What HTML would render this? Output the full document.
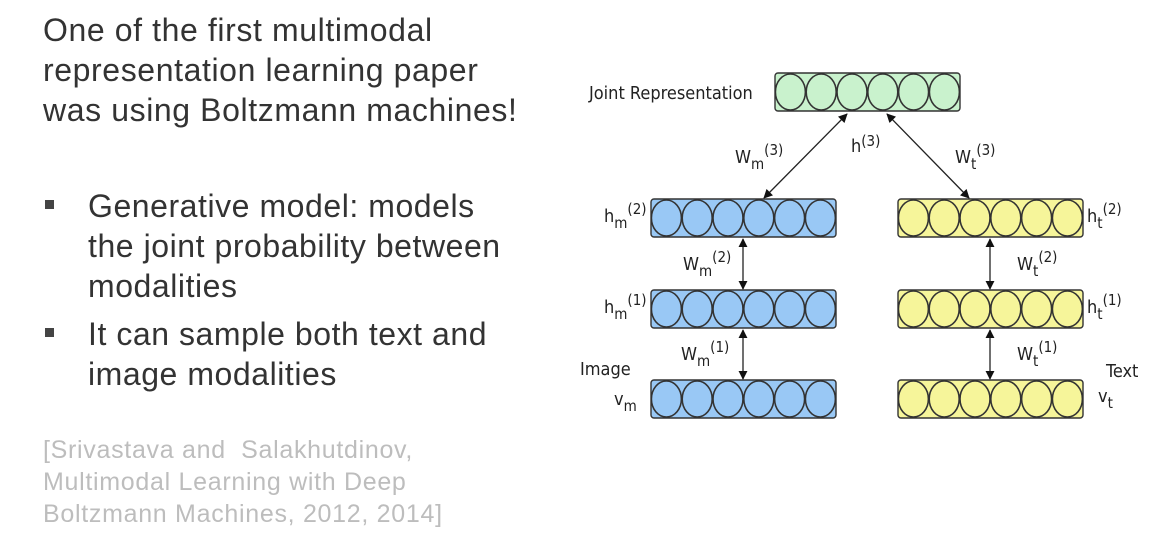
<!DOCTYPE html>
<html><head><style>
body{margin:0;width:1151px;height:538px;background:#fff;overflow:hidden;position:relative;font-family:"Liberation Sans",Arial,sans-serif;}
.t{position:absolute;left:43px;top:10px;font-size:32px;letter-spacing:0.6px;line-height:40px;color:#333;white-space:nowrap;}
.b{position:absolute;left:88px;font-size:32px;letter-spacing:0.55px;line-height:40px;color:#333;white-space:nowrap;}
.sq{position:absolute;left:45px;width:9px;height:9px;background:#444;}
.c{position:absolute;left:43px;top:434px;font-size:25px;letter-spacing:0.7px;line-height:32px;color:#bdbdbd;white-space:nowrap;}
svg{position:absolute;left:0;top:0}
</style></head><body>
<div class="t">One of the first multimodal<br>representation learning paper<br>was using Boltzmann machines!</div>
<div class="sq" style="top:200px"></div>
<div class="b" style="top:186px">Generative model: models<br>the joint probability between<br>modalities</div>
<div class="sq" style="top:328px"></div>
<div class="b" style="top:314px">It can sample both text and<br>image modalities</div>
<div class="c">[Srivastava and&nbsp; Salakhutdinov,<br>Multimodal Learning with Deep<br>Boltzmann Machines, 2012, 2014]</div>
<svg width="1151" height="538" font-family="'DejaVu Sans Condensed','Liberation Sans Narrow',sans-serif" fill="#222">
<defs>
<marker id="a" viewBox="0 0 10 10" refX="9" refY="5" markerWidth="7" markerHeight="7" orient="auto-start-reverse"><path d="M0,0L10,5L0,10z" fill="#111"/></marker>
<g id="row">
<rect x="0" y="0" width="185" height="38" rx="3"/>
<g fill="none" stroke="#333" stroke-width="1.6">
<ellipse cx="15.4" cy="19" rx="15" ry="18"/><ellipse cx="46.2" cy="19" rx="15" ry="18"/><ellipse cx="77" cy="19" rx="15" ry="18"/><ellipse cx="107.8" cy="19" rx="15" ry="18"/><ellipse cx="138.6" cy="19" rx="15" ry="18"/><ellipse cx="169.4" cy="19" rx="15" ry="18"/>
</g>
<rect x="0" y="0" width="185" height="38" rx="3" fill="none" stroke="#333" stroke-width="1.4"/>
</g>
</defs>
<use href="#row" x="775" y="73" fill="#c9f2cd"/>
<use href="#row" x="651" y="199" fill="#99c8f5"/>
<use href="#row" x="651" y="290" fill="#99c8f5"/>
<use href="#row" x="651" y="380" fill="#99c8f5"/>
<use href="#row" x="898" y="199" fill="#f6f59a"/>
<use href="#row" x="898" y="290" fill="#f6f59a"/>
<use href="#row" x="898" y="380" fill="#f6f59a"/>
<g stroke="#222" stroke-width="1.3">
<line x1="847" y1="114" x2="764" y2="198" marker-start="url(#a)" marker-end="url(#a)"/>
<line x1="887" y1="114" x2="969" y2="198" marker-start="url(#a)" marker-end="url(#a)"/>
<line x1="743" y1="239" x2="743" y2="289" marker-start="url(#a)" marker-end="url(#a)"/>
<line x1="743" y1="330" x2="743" y2="379" marker-start="url(#a)" marker-end="url(#a)"/>
<line x1="990" y1="239" x2="990" y2="289" marker-start="url(#a)" marker-end="url(#a)"/>
<line x1="990" y1="330" x2="990" y2="379" marker-start="url(#a)" marker-end="url(#a)"/>
</g>
<g font-size="18">
<text x="589" y="99">Joint Representation</text>
<text x="735" y="163">W<tspan font-size="15" dy="6">m</tspan><tspan font-size="15" dy="-14">(3)</tspan></text>
<text x="851" y="152">h<tspan font-size="15" dy="-6">(3)</tspan></text>
<text x="955" y="163">W<tspan font-size="15" dy="6">t</tspan><tspan font-size="15" dy="-14">(3)</tspan></text>
<text x="604" y="222">h<tspan font-size="15" dy="6">m</tspan><tspan font-size="15" dy="-14">(2)</tspan></text>
<text x="604" y="313">h<tspan font-size="15" dy="6">m</tspan><tspan font-size="15" dy="-14">(1)</tspan></text>
<text x="683" y="270">W<tspan font-size="15" dy="6">m</tspan><tspan font-size="15" dy="-14">(2)</tspan></text>
<text x="681" y="360">W<tspan font-size="15" dy="6">m</tspan><tspan font-size="15" dy="-14">(1)</tspan></text>
<text x="580" y="375">Image</text>
<text x="614" y="405">v<tspan font-size="15" dy="6">m</tspan></text>
<text x="1087" y="222">h<tspan font-size="15" dy="6">t</tspan><tspan font-size="15" dy="-14">(2)</tspan></text>
<text x="1087" y="313">h<tspan font-size="15" dy="6">t</tspan><tspan font-size="15" dy="-14">(1)</tspan></text>
<text x="1017" y="270">W<tspan font-size="15" dy="6">t</tspan><tspan font-size="15" dy="-14">(2)</tspan></text>
<text x="1017" y="360">W<tspan font-size="15" dy="6">t</tspan><tspan font-size="15" dy="-14">(1)</tspan></text>
<text x="1106" y="377">Text</text>
<text x="1098" y="402">v<tspan font-size="15" dy="6">t</tspan></text>
</g>
</svg>
</body></html>
